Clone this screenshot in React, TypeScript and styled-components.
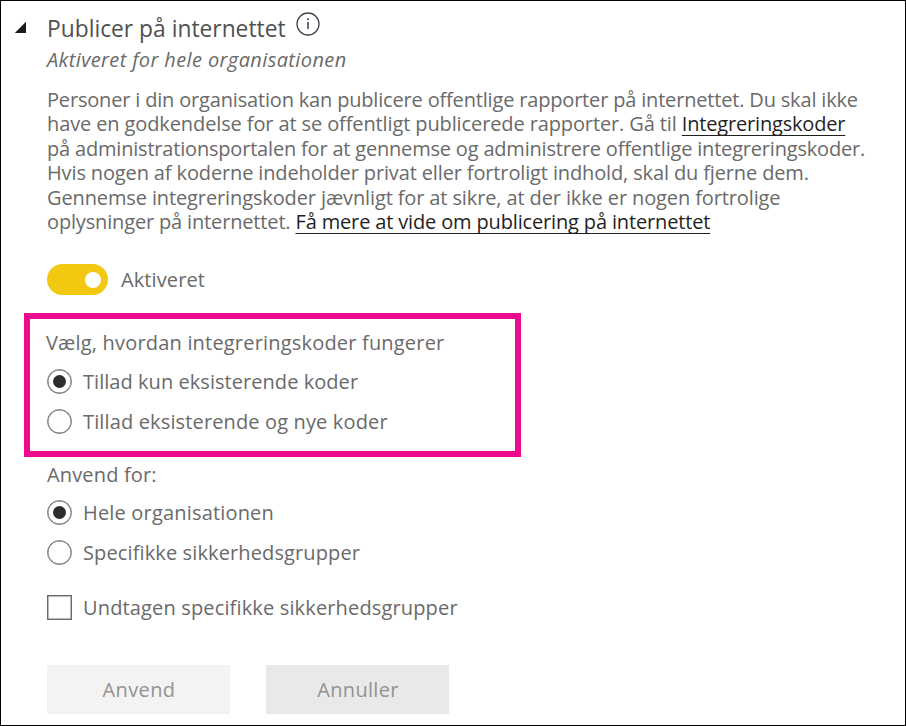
import React, { useState } from "react";
import styled, { createGlobalStyle } from "styled-components";

const GlobalStyle = createGlobalStyle`
  *, *::before, *::after { box-sizing: border-box; }
  body { margin: 0; background: #fff; }
`;

const Panel = styled.main`
  width: 906px;
  height: 726px;
  border: 1px solid #000;
  background: #fff;
  padding-left: 46px;
  overflow: hidden;
  color: #6a6a6a;
  font-family: "Open Sans", "Noto Sans", sans-serif;
  font-size: 20px;
`;

const Header = styled.header`
  display: flex;
  align-items: flex-start;
  height: 44px;
  margin-left: -33px;
`;

const Collapse = styled.svg`
  width: 14px;
  height: 14px;
  margin: 20px 19px 0 0;
`;

const Title = styled.h1`
  margin: 12px 10px 0 0;
  color: #505050;
  font-size: 22.8px;
  font-weight: 400;
  line-height: 31px;
  white-space: nowrap;
`;

const InfoIcon = styled.svg`
  width: 24px;
  height: 24px;
  margin-top: 11px;
`;

const Subtitle = styled.p`
  margin: 0;
  height: 43px;
  font-size: 20px;
  font-style: italic;
  letter-spacing: 0.38px;
  line-height: 29px;
  white-space: nowrap;
`;

const Description = styled.p`
  margin: 0;
  height: 147px;
  line-height: 24.4px;
`;

const Line = styled.span<{ $spacing: number }>`
  display: block;
  white-space: pre;
  letter-spacing: ${(p) => p.$spacing}px;
`;

const Link = styled.a<{ $spacing: number }>`
  color: #1f1f1f;
  letter-spacing: ${(p) => p.$spacing}px;
  text-decoration: underline 1px;
  text-underline-offset: 4px;
  text-decoration-skip-ink: none;
`;

const ToggleRow = styled.div`
  display: flex;
  align-items: center;
  gap: 13px;
  height: 31px;
  margin-top: 29px;
`;

const Toggle = styled.button<{ $on: boolean }>`
  display: flex;
  align-items: center;
  justify-content: ${(p) => (p.$on ? "flex-end" : "flex-start")};
  width: 61px;
  height: 31px;
  padding: 0 7px;
  border: 0;
  border-radius: 16px;
  background: ${(p) => (p.$on ? "#f2c811" : "#a6a6a6")};
`;

const Knob = styled.span`
  width: 16px;
  height: 16px;
  border-radius: 50%;
  background: #fff;
`;

const Label = styled.span<{ $spacing?: number }>`
  line-height: 28px;
  white-space: nowrap;
  letter-spacing: ${(p) => p.$spacing ?? 0}px;
`;

const Highlight = styled.section`
  width: 497px;
  height: 144px;
  margin: 18px 0 0 -23px;
  padding: 9px 0 0 16px;
  border: 6px solid #ec0b8c;
`;

const Group = styled.section`
  padding-top: 3px;
`;

const GroupTitle = styled.div`
  display: flex;
  height: 28px;
  padding-top: 1px;
`;

const Option = styled.label<{ $top: number }>`
  display: flex;
  align-items: center;
  gap: 11px;
  height: 28px;
  margin-top: ${(p) => p.$top}px;

  ${Label} {
    padding-top: 2px;
  }
`;

const Radio = styled.span<{ $inset?: boolean; $checked: boolean }>`
  flex: none;
  display: grid;
  place-items: center;
  width: 25px;
  height: 25px;
  margin-left: ${(p) => (p.$inset ? 1 : 0)}px;
  border: 1px solid #777;
  border-radius: 50%;
  box-shadow: inset 0 0 0 0.5px #777;

  &::after {
    content: "";
    width: 13px;
    height: 13px;
    border-radius: 50%;
    background: ${(p) => (p.$checked ? "#2d2d2d" : "transparent")};
  }
`;

const Checkbox = styled.span`
  flex: none;
  width: 25px;
  height: 25px;
  border: 1px solid #6c6c6c;
  box-shadow: inset 0 0 0 0.5px #777;
`;

const Actions = styled.footer`
  display: flex;
  gap: 36px;
  margin-top: 44px;
`;

const Button = styled.button<{ $tone: string; $spacing: number }>`
  width: 183px;
  height: 49px;
  padding: 0 0 1px 1px;
  border: 0;
  background: ${(p) => p.$tone};
  color: #959290;
  font: inherit;
  letter-spacing: ${(p) => p.$spacing}px;
`;

export default function App() {
  const [enabled, setEnabled] = useState(true);
  const [codes, setCodes] = useState("existing");
  const [scope, setScope] = useState("all");

  return (
    <>
      <GlobalStyle />
      <Panel>
        <Header>
          <Collapse viewBox="0 0 14 14">
            <path d="M0.8 12 L12 0.8 V12 Z" fill="#1b1b20" />
          </Collapse>
          <Title>Publicer på internettet</Title>
          <InfoIcon viewBox="0 0 24 24" fill="none">
            <circle cx="12" cy="12" r="11" stroke="#45454d" strokeWidth="1.3" />
            <path d="M12 10v7" stroke="#4a3058" strokeWidth="1.5" />
            <circle cx="12" cy="7.3" r="1" fill="#4a3058" />
          </InfoIcon>
        </Header>
        <Subtitle>Aktiveret for hele organisationen</Subtitle>

        <Description>
          <Line $spacing={-0.175}>
            Personer i din organisation kan publicere offentlige rapporter på internettet. Du skal ikke
          </Line>
          <Line $spacing={-0.115}>
            {"have en godkendelse for at se offentligt publicerede rapporter. Gå til "}
            <Link $spacing={-0.177}>Integreringskoder</Link>
          </Line>
          <Line $spacing={-0.19}>
            på administrationsportalen for at gennemse og administrere offentlige integreringskoder.
          </Line>
          <Line $spacing={-0.135}>
            Hvis nogen af koderne indeholder privat eller fortroligt indhold, skal du fjerne dem.
          </Line>
          <Line $spacing={-0.12}>
            Gennemse integreringskoder jævnligt for at sikre, at der ikke er nogen fortrolige
          </Line>
          <Line $spacing={-0.156}>
            {"oplysninger på internettet. "}
            <Link $spacing={-0.152}>Få mere at vide om publicering på internettet</Link>
          </Line>
        </Description>

        <ToggleRow>
          <Toggle $on={enabled} onClick={() => setEnabled(!enabled)}>
            <Knob />
          </Toggle>
          <Label $spacing={0.1}>Aktiveret</Label>
        </ToggleRow>

        <Highlight>
          <GroupTitle>
            <Label $spacing={0.19}>Vælg, hvordan integreringskoder fungerer</Label>
          </GroupTitle>
          <Option $top={11} onClick={() => setCodes("existing")}>
            <Radio $inset $checked={codes === "existing"} />
            <Label $spacing={0.05}>Tillad kun eksisterende koder</Label>
          </Option>
          <Option $top={12} onClick={() => setCodes("new")}>
            <Radio $inset $checked={codes === "new"} />
            <Label $spacing={0.14}>Tillad eksisterende og nye koder</Label>
          </Option>
        </Highlight>

        <Group>
          <GroupTitle>
            <Label $spacing={0.15}>Anvend for:</Label>
          </GroupTitle>
          <Option $top={10} onClick={() => setScope("all")}>
            <Radio $checked={scope === "all"} />
            <Label $spacing={0.18}>Hele organisationen</Label>
          </Option>
          <Option $top={12} onClick={() => setScope("groups")}>
            <Radio $checked={scope === "groups"} />
            <Label $spacing={0.12}>Specifikke sikkerhedsgrupper</Label>
          </Option>
          <Option $top={27}>
            <Checkbox />
            <Label $spacing={0.15}>Undtagen specifikke sikkerhedsgrupper</Label>
          </Option>
        </Group>

        <Actions>
          <Button $tone="#f3f3f3" $spacing={0.4}>Anvend</Button>
          <Button $tone="#e9e9e9" $spacing={0.3}>Annuller</Button>
        </Actions>
      </Panel>
    </>
  );
}
